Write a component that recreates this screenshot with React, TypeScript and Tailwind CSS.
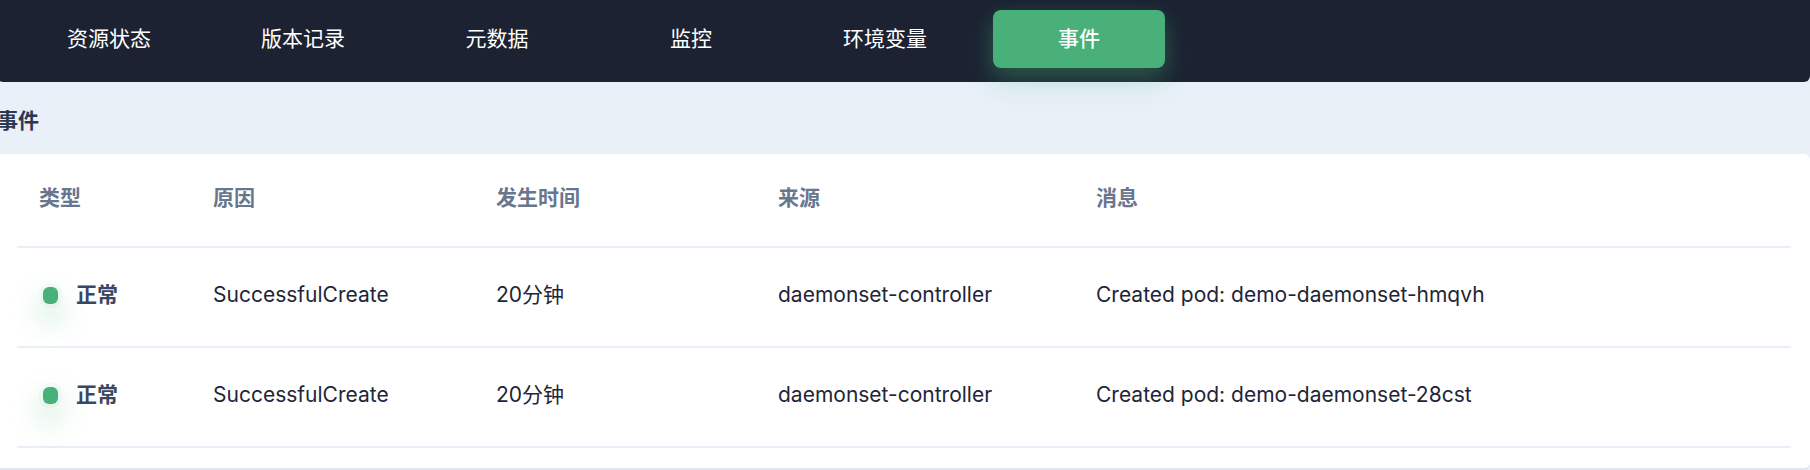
const tabs = ['资源状态', '版本记录', '元数据', '监控', '环境变量', '事件'];

const columns = [
  { label: '类型', width: 'w-[174px]' },
  { label: '原因', width: 'w-[283px]' },
  { label: '发生时间', width: 'w-[282px]' },
  { label: '来源', width: 'w-[318px]' },
  { label: '消息', width: '' },
];

const events = [
  {
    type: '正常',
    reason: 'SuccessfulCreate',
    time: '20分钟',
    source: 'daemonset-controller',
    message: 'Created pod: demo-daemonset-hmqvh',
  },
  {
    type: '正常',
    reason: 'SuccessfulCreate',
    time: '20分钟',
    source: 'daemonset-controller',
    message: 'Created pod: demo-daemonset-28cst',
  },
];

const cell = 'border-b-2 border-[#e9eff9] pb-1 pl-[22px]';

function TabBar({ active }: { active: string }) {
  return (
    <nav className="flex gap-[22px] rounded-b-md bg-[#1c2232] pt-[10px] pr-6 pb-[14px] pl-[26px]">
      {tabs.map((tab) => (
        <button
          key={tab}
          type="button"
          aria-current={tab === active ? 'page' : undefined}
          className={
            tab === active
              ? 'h-[58px] w-[172px] rounded-lg bg-[#48b078] font-medium text-white shadow-[0_14px_28px_rgba(72,187,120,0.24),0_4px_20px_rgba(72,187,120,0.18)]'
              : 'h-[58px] w-[172px] rounded-lg text-white'
          }
        >
          {tab}
        </button>
      ))}
    </nav>
  );
}

function EventTable() {
  return (
    <table className="w-full table-fixed border-separate border-spacing-0 text-left">
      <thead>
        <tr className="h-[94px] text-[#68768e]">
          {columns.map((column) => (
            <th key={column.label} scope="col" className={`${column.width} ${cell} font-bold`}>
              {column.label}
            </th>
          ))}
        </tr>
      </thead>
      <tbody>
        {events.map((event) => (
          <tr key={event.message} className="h-[100px] text-[#1e2638]">
            <td className={cell}>
              <div className="flex items-center gap-[18px] pl-1 font-bold text-[#3a4763]">
                <span className="h-[17px] w-[15px] rounded-md bg-[#48b078] shadow-[0_14px_28px_4px_rgba(72,187,120,0.28),0_0_0_4px_rgba(72,187,120,0.05)]" />
                {event.type}
              </div>
            </td>
            <td className={cell}>{event.reason}</td>
            <td className={cell}>{event.time}</td>
            <td className={cell}>{event.source}</td>
            <td className={cell}>{event.message}</td>
          </tr>
        ))}
      </tbody>
    </table>
  );
}

export default function App() {
  return (
    <div className="min-h-screen overflow-hidden bg-[#e9f0f8] font-['Inter','Noto_Sans_CJK_SC',sans-serif] text-[21px] leading-8">
      <div className="-ml-[3px]">
        <TabBar active="事件" />
        <main>
          <h1 className="pt-[23px] pb-[17px] font-bold text-[#2d3750]">事件</h1>
          <section className="rounded-md border-b-2 border-[#e1e6f0] bg-white pr-[19px] pb-5 pl-5">
            <EventTable />
          </section>
        </main>
      </div>
    </div>
  );
}
